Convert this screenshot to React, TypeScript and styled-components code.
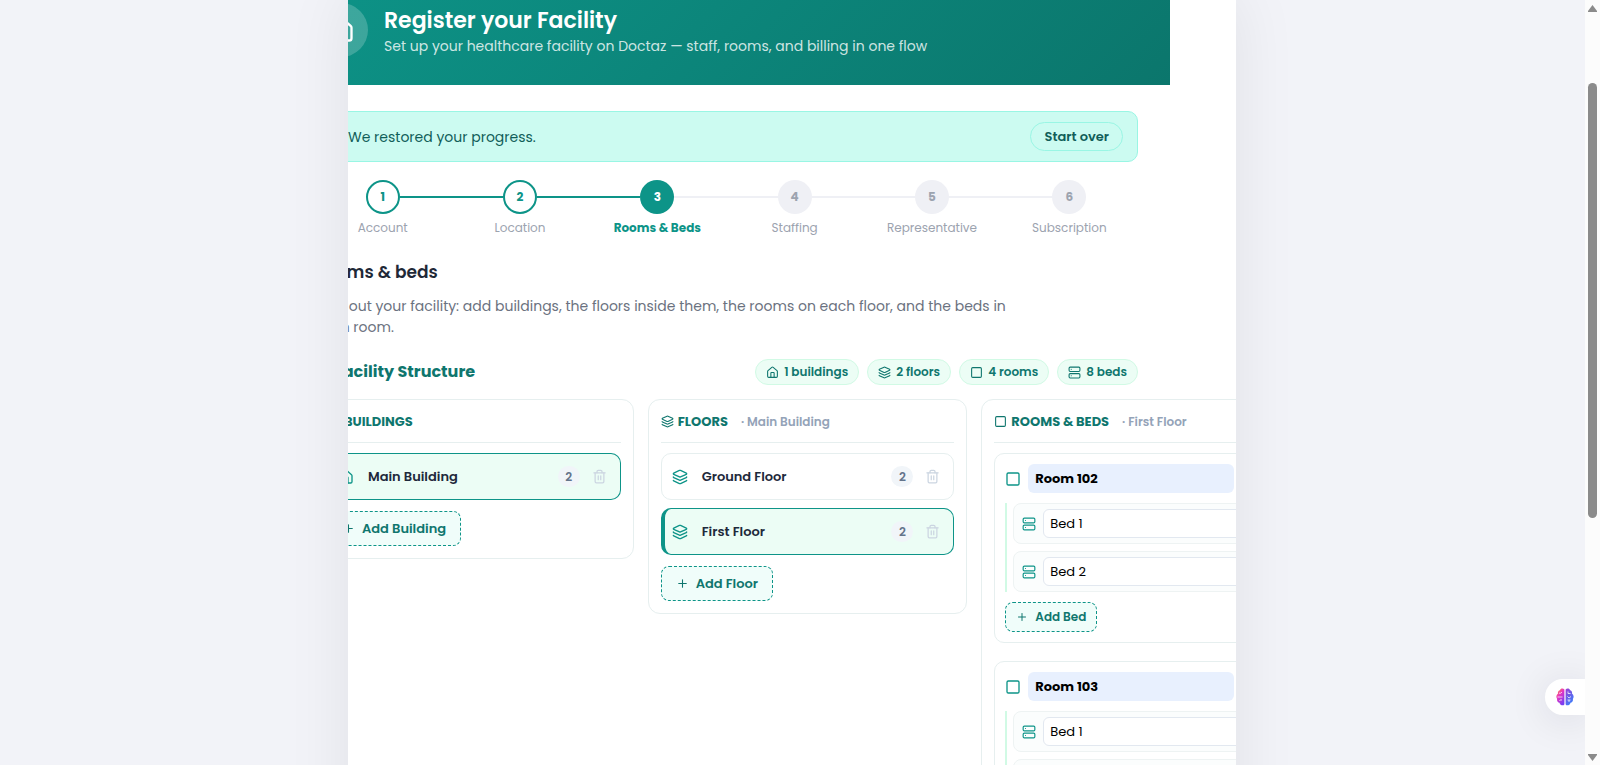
import React from "react";
import styled, { createGlobalStyle, css } from "styled-components";
import { House, Layers, Plus, Server, Square, Trash2, Building2 } from "lucide-react";

const teal = "#0d9488";
const tealDark = "#0f766e";
const line = "#e6efef";

const GlobalStyle = createGlobalStyle`
  *, *::before, *::after { box-sizing: border-box; }
  body { margin: 0; background: #f2f3f8; }
  body, button, input { font-family: Poppins, Inter, "Open Sans", sans-serif; }
  h1, h2, h3, p, ol, ul { margin: 0; padding: 0; }
  ol, ul { list-style: none; }
  svg { flex: none; display: block; }
`;

const Page = styled.div`
  display: flex;
  height: 100vh;
  overflow: hidden;
  background: #f2f3f8;
`;

const Viewport = styled.main`
  flex: 1;
  min-width: 0;
  display: flex;
  justify-content: center;
  align-items: flex-start;
  padding-right: 1px;
`;

const Panel = styled.div`
  width: 100%;
  max-width: 888px;
  margin-top: -25px;
  background: #fff;
  overflow: hidden;
  box-shadow: 0 20px 60px rgba(0, 0, 0, 0.08);
`;

const Scrolled = styled.div`
  margin-left: -66px;
  margin-right: 66px;
`;

const Hero = styled.header`
  display: flex;
  align-items: center;
  gap: 16px;
  padding: 28px 32px;
  background: linear-gradient(135deg, #0d9488 0%, #0b766c 100%);
  color: #fff;
`;

const HeroIcon = styled.span`
  display: grid;
  place-items: center;
  width: 54px;
  height: 54px;
  border-radius: 50%;
  background: rgba(255, 255, 255, 0.2);
`;

const HeroCopy = styled.div`
  padding-top: 4px;
`;

const HeroTitle = styled.h1`
  font-size: 22px;
  line-height: 28px;
  font-weight: 600;
`;

const HeroText = styled.p`
  font-size: 14px;
  line-height: 22px;
  color: rgba(255, 255, 255, 0.8);
`;

const Body = styled.div`
  padding: 26px 32px;
`;

const Notice = styled.div`
  display: flex;
  align-items: center;
  justify-content: space-between;
  padding: 10px 14px 10px 33px;
  border: 1px solid #99f6e4;
  border-radius: 10px;
  background: #ccfbf1;
  color: #115e59;
  font-size: 14px;
  line-height: 24px;
`;

const StartOver = styled.button`
  height: 29px;
  padding: 0 13px;
  border: 1px solid #99f6e4;
  border-radius: 15px;
  background: transparent;
  color: #115e59;
  font-size: 13px;
  font-weight: 600;
`;

const Steps = styled.ol`
  display: grid;
  grid-template-columns: repeat(6, 1fr);
  margin-top: 18px;
`;

type StepState = "done" | "active" | "todo";

const Step = styled.li<{ $state: StepState }>`
  display: grid;
  grid-template-columns: 1fr auto 1fr;
  align-items: center;
  row-gap: 4px;
  color: ${(p) => (p.$state === "active" ? teal : "#9ca3af")};
`;

const StepDot = styled.span<{ $state: StepState }>`
  display: grid;
  place-items: center;
  width: 34px;
  height: 34px;
  border-radius: 50%;
  font-size: 12px;
  font-weight: 700;
  ${(p) =>
    p.$state === "done"
      ? css`background: #fff; border: 2px solid ${teal}; color: ${teal};`
      : p.$state === "active"
        ? css`background: ${teal}; color: #fff;`
        : css`background: #eff0f5; color: #9ca3af;`}
`;

const StepLine = styled.span<{ $tone: "none" | "done" | "todo" }>`
  height: 2px;
  background: ${(p) => (p.$tone === "none" ? "transparent" : p.$tone === "done" ? teal : "#eff0f5")};
`;

const StepLabel = styled.span<{ $active: boolean }>`
  grid-column: 1 / -1;
  text-align: center;
  font-size: 12px;
  line-height: 20px;
  font-weight: ${(p) => (p.$active ? 700 : 400)};
`;

const Title = styled.h2`
  margin-top: 20px;
  font-size: 17px;
  line-height: 28px;
  font-weight: 600;
  color: #1f2937;
`;

const Intro = styled.p`
  max-width: 710px;
  margin-top: 10px;
  font-size: 14px;
  line-height: 21px;
  color: #6b7280;
`;

const StructureBar = styled.div`
  display: flex;
  align-items: center;
  justify-content: space-between;
  margin-top: 21px;
`;

const StructureTitle = styled.h3`
  display: flex;
  align-items: center;
  gap: 4px;
  font-size: 16px;
  line-height: 24px;
  font-weight: 700;
  color: ${tealDark};
`;

const Pills = styled.ul`
  display: flex;
  gap: 8px;
`;

const Pill = styled.li`
  display: flex;
  align-items: center;
  gap: 5px;
  height: 26px;
  padding: 0 10px;
  border: 1px solid #d1fae5;
  border-radius: 13px;
  background: #ecfdf5;
  color: ${tealDark};
  font-size: 12px;
  font-weight: 600;
  white-space: nowrap;
`;

const Columns = styled.div`
  display: grid;
  grid-template-columns: repeat(3, minmax(0, 1fr));
  align-items: start;
  gap: 14px;
  width: 987px;
  margin-top: 14px;
`;

const Column = styled.section`
  padding: 12px;
  border: 1px solid ${line};
  border-radius: 12px;
`;

const ColumnHead = styled.div`
  display: flex;
  align-items: center;
  gap: 4px;
  height: 31px;
  padding-bottom: 11px;
  border-bottom: 1px solid ${line};
  color: ${tealDark};
`;

const ColumnTitle = styled.h3`
  font-size: 13px;
  line-height: 20px;
  font-weight: 700;
  text-transform: uppercase;
`;

const ColumnSub = styled.span`
  margin-left: 9px;
  font-size: 12px;
  line-height: 20px;
  font-weight: 600;
  color: #94a3b8;
`;

const Rows = styled.ul`
  display: grid;
  gap: 8px;
  margin-top: 10px;
`;

const Row = styled.li<{ $selected?: boolean }>`
  display: flex;
  align-items: center;
  height: 47px;
  padding: 0 13px 0 10px;
  border: 1px solid ${(p) => (p.$selected ? teal : line)};
  border-radius: 10px;
  background: ${(p) => (p.$selected ? "#ecfdf5" : "#fff")};
  color: ${teal};
  ${(p) =>
    p.$selected &&
    css`
      border-left-width: 4px;
      padding-left: 7px;
    `}
`;

const RowName = styled.span`
  flex: 1;
  margin-left: 14px;
  font-size: 13px;
  font-weight: 600;
  color: #1e293b;
`;

const Count = styled.span`
  min-width: 22px;
  height: 21px;
  border-radius: 11px;
  background: #f1f5f9;
  color: #64748b;
  font-size: 12px;
  line-height: 21px;
  font-weight: 600;
  text-align: center;
`;

const IconButton = styled.button`
  margin-left: 12px;
  padding: 0;
  border: 0;
  background: none;
  color: #cbd5e1;
`;

const AddButton = styled.button<{ $small?: boolean }>`
  display: inline-flex;
  align-items: center;
  gap: 7px;
  height: ${(p) => (p.$small ? 30 : 35)}px;
  margin-top: ${(p) => (p.$small ? 10 : 11)}px;
  padding: 0 ${(p) => (p.$small ? 10 : 14)}px;
  border: 1px dashed ${teal};
  border-radius: 8px;
  background: #f0fdfa;
  color: ${tealDark};
  font-size: ${(p) => (p.$small ? 12 : 13)}px;
  font-weight: 600;
`;

const Room = styled.article`
  margin-top: 10px;
  padding: 10px;
  border: 1px solid ${line};
  border-radius: 10px;

  & + & {
    margin-top: 18px;
  }
`;

const RoomHead = styled.div`
  display: flex;
  align-items: center;
  gap: 7px;
  color: ${teal};
`;

const RoomName = styled.input`
  width: 206px;
  height: 29px;
  padding: 0 7px;
  border: 0;
  border-radius: 6px;
  background: #e8f0fe;
  color: #000;
  font-size: 13px;
  font-weight: 700;
`;

const Beds = styled.ul`
  display: grid;
  gap: 7px;
  margin-top: 10px;
  padding-left: 6px;
  border-left: 2px solid #d1fae5;
`;

const Bed = styled.li`
  display: flex;
  align-items: center;
  gap: 7px;
  padding: 5px 8px;
  border: 1px solid #eef3f3;
  border-radius: 8px;
  background: #fbfdfd;
  color: ${teal};
`;

const BedName = styled.input`
  flex: 1;
  min-width: 0;
  height: 29px;
  padding: 0 6px;
  border: 1px solid #e2e8f0;
  border-radius: 6px;
  background: #fff;
  color: #000;
  font-size: 13px;
`;

const Assistant = styled.button`
  position: fixed;
  right: 15px;
  bottom: 50px;
  display: flex;
  align-items: center;
  width: 40px;
  height: 36px;
  padding: 0 0 0 11px;
  border: 0;
  border-radius: 18px 0 0 18px;
  background: #fff;
  box-shadow: 0 4px 40px rgba(15, 23, 42, 0.12);
`;

const ScrollRail = styled.div`
  position: relative;
  z-index: 1;
  display: grid;
  grid-template-rows: 12px 5px 66fr 435fr 230fr 6px 11px;
  justify-items: center;
  width: 15px;
  background: #fcfcfc;
  color: #8b8b8b;
`;

const ScrollThumb = styled.span`
  grid-row: 4;
  width: 9px;
  border-radius: 5px;
  background: currentColor;
`;

const ScrollArrow = styled.svg<{ $down?: boolean }>`
  grid-row: ${(p) => (p.$down ? 7 : 1)};
  align-self: ${(p) => (p.$down ? "start" : "end")};
`;

const steps: { name: string; state: StepState }[] = [
  { name: "Account", state: "done" },
  { name: "Location", state: "done" },
  { name: "Rooms & Beds", state: "active" },
  { name: "Staffing", state: "todo" },
  { name: "Representative", state: "todo" },
  { name: "Subscription", state: "todo" },
];

const toneAt = (edge: number) =>
  edge <= 0 || edge >= steps.length ? "none" : steps[edge - 1].state === "done" ? "done" : "todo";

function BrainMark() {
  return (
    <svg width="18" height="18" viewBox="0 0 18 18" aria-hidden="true">
      <defs>
        <linearGradient id="brainLeft" x1="0" y1="0" x2="0.6" y2="1">
          <stop offset="0" stopColor="#fb9a1f" />
          <stop offset="0.45" stopColor="#e935c1" />
          <stop offset="1" stopColor="#7a3df0" />
        </linearGradient>
        <linearGradient id="brainRight" x1="0" y1="0" x2="0.5" y2="1">
          <stop offset="0" stopColor="#9b3fd6" />
          <stop offset="1" stopColor="#3f7cf8" />
        </linearGradient>
      </defs>
      <path d="M8.4 1.6C7.2-.2 4.4.2 3.9 2.300 2.300 2.600 1.600 4.300 2 5.800.2 6.900-.1 9.600 1.100 10.900.7 12.900 1.900 14.500 3.500 14.700 4.200 17.600 7.500 18.200 8.400 16.200Z" fill="url(#brainLeft)" />
      <path d="M9.600 1.600C10.800-.2 13.600.2 14.100 2.300 15.700 2.600 16.400 4.300 16 5.800 17.800 6.900 18.100 9.600 16.900 10.900 17.300 12.900 16.100 14.500 14.500 14.700 13.800 17.600 10.500 18.200 9.600 16.200Z" fill="url(#brainRight)" />
      <path d="M3 5.200q2 .6 3-1.200M1.500 9h5M3.500 13q.5-1.800 2.500-1M12 3.500v2h2.500M11.500 8.500l1.500 1.500 2-1.500M11.500 12h3M13 12v2" fill="none" stroke="#fff" strokeOpacity=".75" strokeWidth="1" />
    </svg>
  );
}

function TreeRow({ icon, name, count, selected }: { icon: React.ReactNode; name: string; count: number; selected?: boolean }) {
  return (
    <Row $selected={selected}>
      {icon}
      <RowName>{name}</RowName>
      <Count>{count}</Count>
      <IconButton type="button" aria-label={`Delete ${name}`}>
        <Trash2 size={15} />
      </IconButton>
    </Row>
  );
}

function RoomCard({ name, beds }: { name: string; beds: string[] }) {
  return (
    <Room>
      <RoomHead>
        <Square size={16} />
        <RoomName aria-label="Room name" defaultValue={name} />
      </RoomHead>
      <Beds>
        {beds.map((bed) => (
          <Bed key={bed}>
            <Server size={14} />
            <BedName aria-label={`${name} bed name`} defaultValue={bed} />
          </Bed>
        ))}
      </Beds>
      <AddButton type="button" $small>
        <Plus size={12} />
        Add Bed
      </AddButton>
    </Room>
  );
}

export default function App() {
  return (
    <>
      <GlobalStyle />
      <Page>
        <Viewport>
          <Panel>
            <Scrolled>
              <Hero>
                <HeroIcon>
                  <House size={28} />
                </HeroIcon>
                <HeroCopy>
                  <HeroTitle>Register your Facility</HeroTitle>
                  <HeroText>Set up your healthcare facility on Doctaz — staff, rooms, and billing in one flow</HeroText>
                </HeroCopy>
              </Hero>
              <Body>
                <Notice role="status">
                  We restored your progress.
                  <StartOver type="button">Start over</StartOver>
                </Notice>
                <Steps>
                  {steps.map((s, i) => (
                    <Step key={s.name} $state={s.state}>
                      <StepLine $tone={toneAt(i)} />
                      <StepDot $state={s.state}>{i + 1}</StepDot>
                      <StepLine $tone={toneAt(i + 1)} />
                      <StepLabel $active={s.state === "active"}>{s.name}</StepLabel>
                    </Step>
                  ))}
                </Steps>
                <Title>Rooms &amp; beds</Title>
                <Intro>
                  Map out your facility: add buildings, the floors inside them, the rooms on each floor, and the beds in each room.
                </Intro>
                <StructureBar>
                  <StructureTitle>
                    <Building2 size={16} />
                    Facility Structure
                  </StructureTitle>
                  <Pills>
                    <Pill><House size={13} />1 buildings</Pill>
                    <Pill><Layers size={13} />2 floors</Pill>
                    <Pill><Square size={13} />4 rooms</Pill>
                    <Pill><Server size={13} />8 beds</Pill>
                  </Pills>
                </StructureBar>
                <Columns>
                  <Column>
                    <ColumnHead>
                      <House size={13} />
                      <ColumnTitle>Buildings</ColumnTitle>
                    </ColumnHead>
                    <Rows>
                      <TreeRow icon={<House size={16} />} name="Main Building" count={2} selected />
                    </Rows>
                    <AddButton type="button">
                      <Plus size={13} />
                      Add Building
                    </AddButton>
                  </Column>
                  <Column>
                    <ColumnHead>
                      <Layers size={13} />
                      <ColumnTitle>Floors</ColumnTitle>
                      <ColumnSub>· Main Building</ColumnSub>
                    </ColumnHead>
                    <Rows>
                      <TreeRow icon={<Layers size={16} />} name="Ground Floor" count={2} />
                      <TreeRow icon={<Layers size={16} />} name="First Floor" count={2} selected />
                    </Rows>
                    <AddButton type="button">
                      <Plus size={13} />
                      Add Floor
                    </AddButton>
                  </Column>
                  <Column>
                    <ColumnHead>
                      <Square size={13} />
                      <ColumnTitle>Rooms &amp; Beds</ColumnTitle>
                      <ColumnSub>· First Floor</ColumnSub>
                    </ColumnHead>
                    <RoomCard name="Room 102" beds={["Bed 1", "Bed 2"]} />
                    <RoomCard name="Room 103" beds={["Bed 1", "Bed 2"]} />
                  </Column>
                </Columns>
              </Body>
            </Scrolled>
          </Panel>
        </Viewport>
        <ScrollRail aria-hidden="true">
          <ScrollArrow width="9" height="7" viewBox="0 0 9 7">
            <path d="M4.500 0 9 6v1H0V6Z" fill="currentColor" />
          </ScrollArrow>
          <ScrollThumb />
          <ScrollArrow $down width="9" height="7" viewBox="0 0 9 7">
            <path d="M4.500 7 9 1V0H0v1Z" fill="currentColor" />
          </ScrollArrow>
        </ScrollRail>
        <Assistant type="button" aria-label="Open assistant">
          <BrainMark />
        </Assistant>
      </Page>
    </>
  );
}
